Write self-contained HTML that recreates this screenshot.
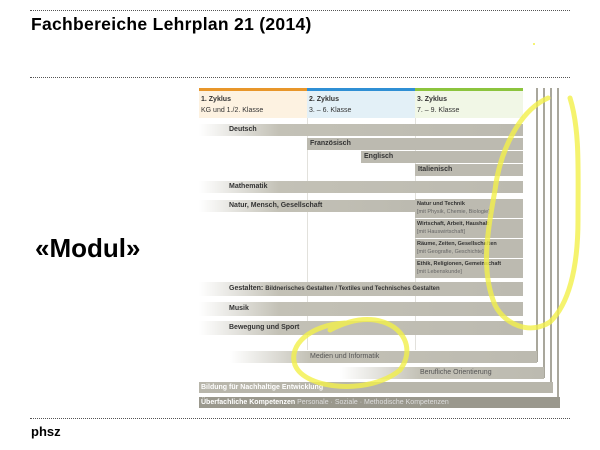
<!DOCTYPE html>
<html><head><meta charset="utf-8"><style>
body{margin:0;width:600px;height:450px;background:#fff;position:relative;overflow:hidden;font-family:"Liberation Sans",sans-serif}
.a{position:absolute}
.dl{position:absolute;left:30px;width:540px;border-top:1px dotted #555;height:0}
.r{position:absolute;height:12px;font-size:7px;font-weight:bold;color:#333;line-height:12px;background:linear-gradient(90deg,#fff 0,#c3c1b6 80px,#bcbab0 100%)}
.s{position:absolute;background:#bcbab0;font-size:7px;font-weight:bold;color:#333;line-height:12px;padding-left:3px;box-sizing:border-box}
.b{position:absolute;left:415px;width:108px;height:19px;background:#bcbab0;font-size:5.5px;color:#333;padding:1px 2px;box-sizing:border-box;line-height:8px}
.b i{font-style:normal;color:#666;font-weight:normal}
.v{position:absolute;width:2px;background:#a9a79c}
</style></head><body>
<div class="dl" style="top:10px"></div>
<div class="a" style="left:31px;top:14px;font-size:17.5px;font-weight:bold;letter-spacing:0.3px">Fachbereiche Lehrplan 21 (2014)</div>
<div class="dl" style="top:77px"></div>
<div class="a" style="left:35px;top:233px;font-size:26px;font-weight:bold">«Modul»</div>
<div class="dl" style="top:418px"></div>
<div class="a" style="left:31px;top:424px;font-size:13px;font-weight:bold">phsz</div>

<div class="a" style="left:199px;top:88px;width:108px;height:3px;background:#e8962a"></div>
<div class="a" style="left:307px;top:88px;width:108px;height:3px;background:#2f8fd4"></div>
<div class="a" style="left:415px;top:88px;width:108px;height:3px;background:#8cc43e"></div>
<div class="a" style="left:199px;top:91px;width:108px;height:27px;background:#fdf2e1;font-size:7px;color:#333;padding:3px 2px;box-sizing:border-box;line-height:11px"><b>1. Zyklus</b><br>KG und 1./2. Klasse</div>
<div class="a" style="left:307px;top:91px;width:108px;height:27px;background:#e3f0f7;font-size:7px;color:#333;padding:3px 2px;box-sizing:border-box;line-height:11px"><b>2. Zyklus</b><br>3. – 6. Klasse</div>
<div class="a" style="left:415px;top:91px;width:108px;height:27px;background:#f1f7e6;font-size:7px;color:#333;padding:3px 2px;box-sizing:border-box;line-height:11px"><b>3. Zyklus</b><br>7. – 9. Klasse</div>
<div class="a" style="left:307px;top:118px;width:1px;height:232px;background:#e2e1dc"></div>
<div class="a" style="left:415px;top:118px;width:1px;height:232px;background:#e2e1dc"></div>

<div class="v" style="left:536px;top:88px;height:274px"></div>
<div class="v" style="left:543px;top:88px;height:290px"></div>
<div class="v" style="left:550px;top:88px;height:305px"></div>
<div class="v" style="left:557px;top:88px;height:319px"></div>

<div class="r" style="left:199px;top:124px;width:324px;padding-left:30px;box-sizing:border-box">Deutsch</div>
<div class="s" style="left:307px;top:138px;width:216px;height:12px">Französisch</div>
<div class="s" style="left:361px;top:151px;width:162px;height:12px">Englisch</div>
<div class="s" style="left:415px;top:164px;width:108px;height:12px">Italienisch</div>
<div class="r" style="left:199px;top:181px;width:324px;padding-left:30px;box-sizing:border-box">Mathematik</div>
<div class="r" style="left:199px;top:200px;width:216px;padding-left:30px;box-sizing:border-box">Natur, Mensch, Gesellschaft</div>
<div class="b" style="top:199px"><b>Natur und Technik</b><br><i>[mit Physik, Chemie, Biologie]</i></div>
<div class="b" style="top:219px"><b>Wirtschaft, Arbeit, Haushalt</b><br><i>[mit Hauswirtschaft]</i></div>
<div class="b" style="top:239px"><b>Räume, Zeiten, Gesellschaften</b><br><i>[mit Geografie, Geschichte]</i></div>
<div class="b" style="top:259px"><b>Ethik, Religionen, Gemeinschaft</b><br><i>[mit Lebenskunde]</i></div>
<div class="r" style="left:199px;top:282px;width:324px;height:14px;line-height:14px;padding-left:30px;box-sizing:border-box">Gestalten: <span style="font-size:6px">Bildnerisches Gestalten / Textiles und Technisches Gestalten</span></div>
<div class="r" style="left:199px;top:302px;width:324px;height:14px;line-height:14px;padding-left:30px;box-sizing:border-box">Musik</div>
<div class="r" style="left:199px;top:321px;width:324px;height:14px;line-height:14px;padding-left:30px;box-sizing:border-box">Bewegung und Sport</div>
<div class="r" style="left:230px;top:351px;width:307px;font-weight:normal;color:#555;padding-left:80px;box-sizing:border-box">Medien und Informatik</div>
<div class="r" style="left:340px;top:367px;width:204px;font-weight:normal;color:#555;padding-left:80px;box-sizing:border-box">Berufliche Orientierung</div>
<div class="a" style="left:199px;top:382px;width:352px;height:11px;background:#b8b6ab;color:#fff;font-size:7px;font-weight:bold;line-height:11px;padding-left:2px">Bildung für Nachhaltige Entwicklung</div>
<div class="a" style="left:199px;top:397px;width:359px;height:11px;background:#9a988d;color:#fff;font-size:7px;font-weight:bold;line-height:11px;padding-left:2px">Überfachliche Kompetenzen <span style="font-weight:normal;color:#ddd">Personale · Soziale · Methodische Kompetenzen</span></div>

<svg class="a" style="left:0;top:0" width="600" height="450">
<g fill="none" stroke="#f2f04a" stroke-width="5" stroke-linecap="round" opacity="0.8">
<path d="M548 98 C520 110 500 150 495 190 C488 230 480 270 495 305 C505 325 530 335 550 322 C568 305 578 270 578 220 C578 170 580 130 570 98"/>
<path d="M345 323 C310 325 288 345 295 365 C305 390 370 395 400 370 C415 350 405 325 375 320 C360 318 345 322 330 330"/>
</g>
<circle cx="534" cy="44" r="1" fill="#f2f04a"/>
</svg>
</body></html>
